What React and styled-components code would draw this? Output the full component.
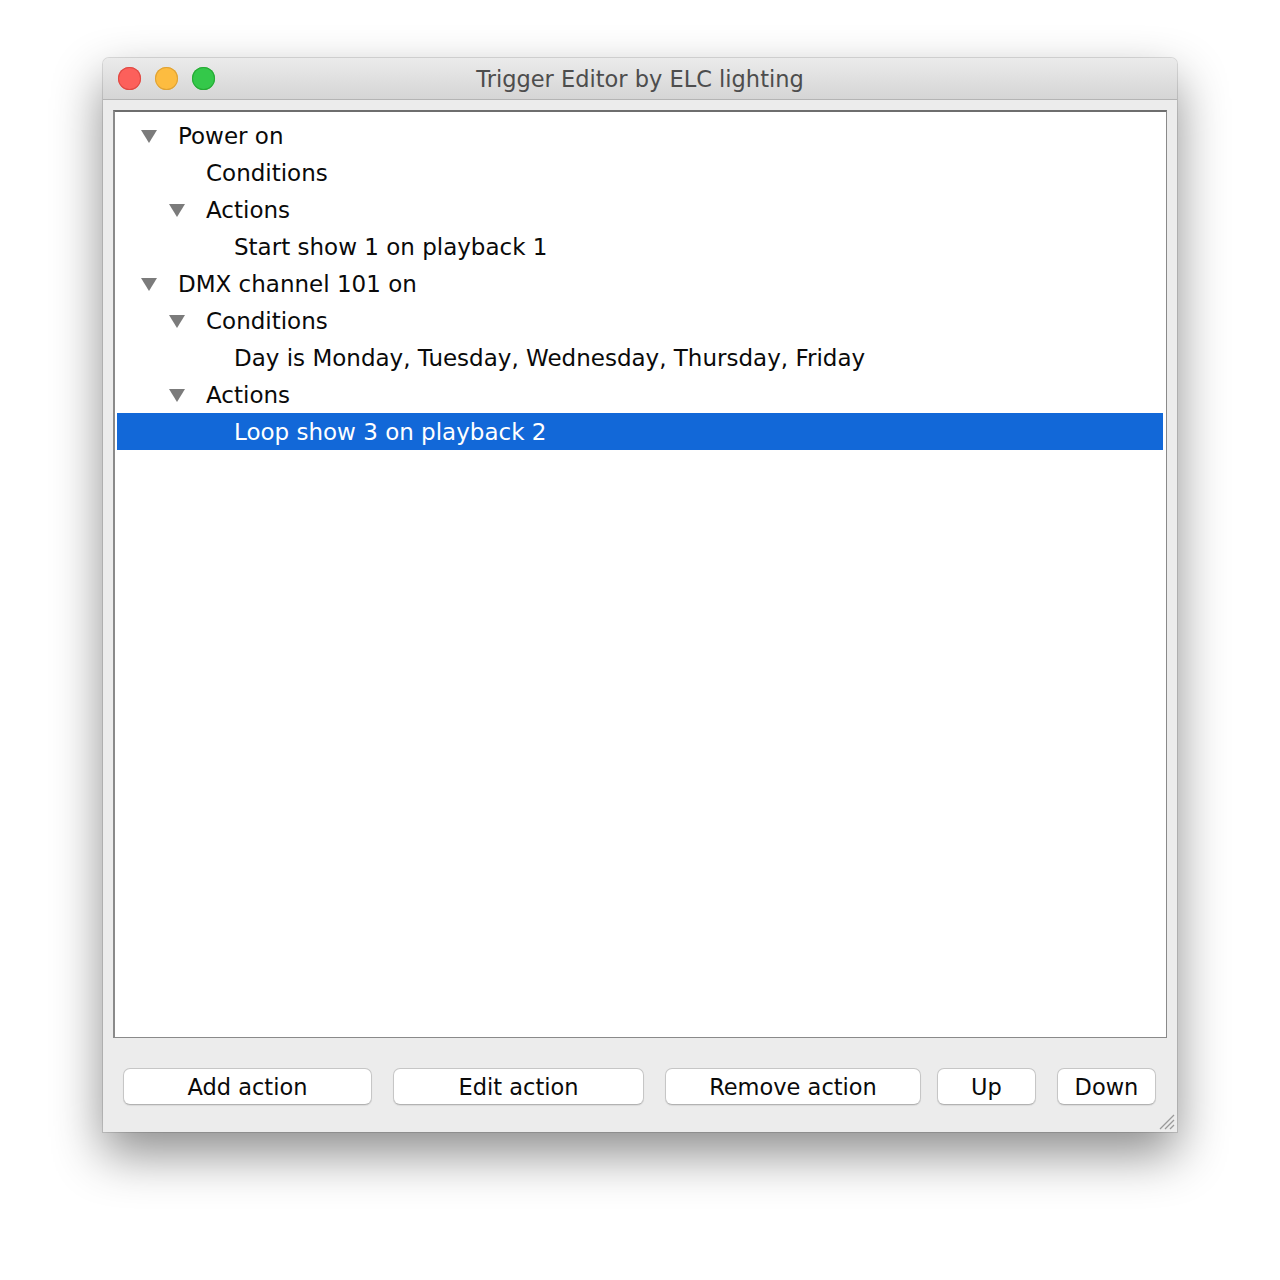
import styled, { createGlobalStyle } from 'styled-components';

const GlobalStyle = createGlobalStyle`
  html, body {
    margin: 0;
    padding: 0;
    background: #ffffff;
  }
  body {
    font-family: "DejaVu Sans", "Liberation Sans", sans-serif;
  }
`;

const treeRows = [
  { level: 0, label: 'Power on', open: true },
  { level: 1, label: 'Conditions' },
  { level: 1, label: 'Actions', open: true },
  { level: 2, label: 'Start show 1 on playback 1' },
  { level: 0, label: 'DMX channel 101 on', open: true },
  { level: 1, label: 'Conditions', open: true },
  { level: 2, label: 'Day is Monday, Tuesday, Wednesday, Thursday, Friday' },
  { level: 1, label: 'Actions', open: true },
  { level: 2, label: 'Loop show 3 on playback 2', selected: true },
];

// widths and left gaps measured off the dialog
const buttons = [
  { label: 'Add action', width: 249, gap: 0 },
  { label: 'Edit action', width: 251, gap: 21 },
  { label: 'Remove action', width: 256, gap: 21 },
  { label: 'Up', width: 99, gap: 16 },
  { label: 'Down', width: 99, gap: 21 },
];

const App = () => {
  return (
    <Page>
      <GlobalStyle />
      <Window>
        <TitleBar>
          <Lights>
            <Light color='#fc605b' edge='#de4a44' />
            <Light color='#fdbc40' edge='#dea236' />
            <Light color='#34c84a' edge='#27aa35' />
          </Lights>
          <Title>Trigger Editor by ELC lighting</Title>
        </TitleBar>
        <Body>
          <Tree>
            {treeRows.map((row, i) => (
              <Row key={i} level={row.level} selected={row.selected}>
                <Disclosure>
                  {row.open && (
                    <svg width='16' height='13' viewBox='0 0 16 13'>
                      <polygon points='0,0 16,0 8,13' fill='#7b7b7b' />
                    </svg>
                  )}
                </Disclosure>
                <Label>{row.label}</Label>
              </Row>
            ))}
          </Tree>
          <ButtonBar>
            {buttons.map((b) => (
              <Button key={b.label} width={b.width} gap={b.gap}>
                {b.label}
              </Button>
            ))}
          </ButtonBar>
          <Grip>
            <svg width='18' height='18' viewBox='0 0 18 18'>
              <line x1='17' y1='3' x2='3' y2='17' stroke='#9a9a9a' strokeWidth='1.2' />
              <line x1='17' y1='8' x2='8' y2='17' stroke='#9a9a9a' strokeWidth='1.2' />
              <line x1='17' y1='13' x2='13' y2='17' stroke='#9a9a9a' strokeWidth='1.2' />
            </svg>
          </Grip>
        </Body>
      </Window>
    </Page>
  );
};

const Page = styled.div`
  width: 1280px;
  height: 1280px;
  padding: 58px 0 0 103px;
  box-sizing: border-box;
`;

const Window = styled.div`
  width: 1074px;
  height: 1074px;
  background: #ececec;
  border-radius: 6px 6px 0 0;
  box-shadow: 0 22px 50px rgba(0, 0, 0, 0.45), 0 0 0 1px rgba(0, 0, 0, 0.12);
  display: flex;
  flex-direction: column;
  overflow: hidden;
`;

const TitleBar = styled.div`
  height: 41px;
  position: relative;
  display: flex;
  align-items: center;
  justify-content: center;
  background: linear-gradient(#ebebeb, #d5d5d5);
  border-bottom: 1px solid #b4b4b4;
`;

const Lights = styled.div`
  position: absolute;
  left: 15px;
  top: 9px;
  display: flex;
  gap: 14px;
`;

const Light = styled.span`
  width: 23px;
  height: 23px;
  border-radius: 50%;
  background: ${({ color }) => color};
  box-shadow: inset 0 0 0 1px ${({ edge }) => edge};
`;

const Title = styled.div`
  font-size: 22.5px;
  color: #4d4d4d;
  margin-left: 0;
  padding-top: 1px;
`;

const Body = styled.div`
  flex: 1;
  position: relative;
  padding: 10px 10px 0 10px;
  display: flex;
  flex-direction: column;
`;

const Tree = styled.div`
  height: 928px;
  box-sizing: border-box;
  background: #ffffff;
  border: 2px solid #8a8a8a;
  border-top-color: #6e6e6e;
  border-right-width: 1px;
  border-bottom-width: 1px;
  padding: 5px 3px 0 2px;
`;

const Row = styled.div`
  height: 37px;
  display: flex;
  align-items: center;
  padding-left: ${({ level }) => 24 + level * 28}px;
  background: ${({ selected }) => (selected ? '#1268d8' : 'transparent')};
  color: ${({ selected }) => (selected ? '#ffffff' : '#0a0a0a')};
`;

const Disclosure = styled.span`
  width: 37px;
  flex: none;
  display: flex;
  align-items: center;
  padding-top: 1px;
`;

const Label = styled.span`
  font-size: 23px;
  white-space: nowrap;
`;

const ButtonBar = styled.div`
  margin-top: 30px;
  padding: 0 10px;
  display: flex;
`;

const Button = styled.button`
  width: ${({ width }) => width}px;
  margin-left: ${({ gap }) => gap}px;
  height: 37px;
  background: #ffffff;
  border: 1px solid #c6c6c6;
  border-bottom-color: #b2b2b2;
  border-radius: 7px;
  font-family: "DejaVu Sans", "Liberation Sans", sans-serif;
  font-size: 22.5px;
  color: #0a0a0a;
  padding: 0;
  box-shadow: 0 1px 1px rgba(0, 0, 0, 0.08);
`;

const Grip = styled.div`
  position: absolute;
  right: 2px;
  bottom: 2px;
  line-height: 0;
`;

export default App;
